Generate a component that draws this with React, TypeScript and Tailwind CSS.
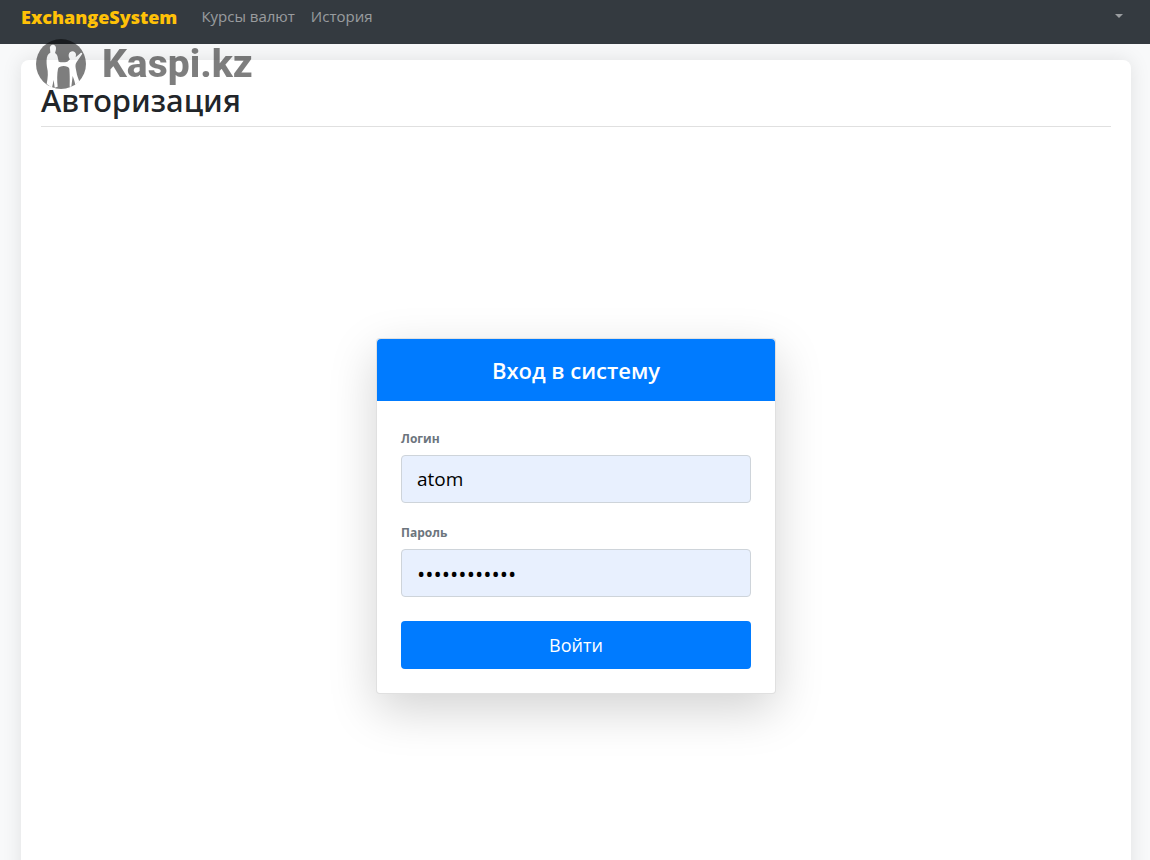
import { useState } from 'react';

const fieldClass =
  'h-12 w-full rounded border border-[#ced4da] bg-[#e8f0fe] px-[15px] text-black outline-none focus:border-[#80bdff]';

const KaspiLogo = () => (
  <div className="pointer-events-none absolute top-[39px] left-9 flex items-center gap-4 text-black opacity-50">
    <svg viewBox="18 15 150 150" className="size-[50px]" aria-hidden="true">
      <mask id="family">
        <circle cx="93" cy="90" r="75" fill="white" />
        <path
          fill="black"
          d="M60 45C58 36 64 32 70 32C77 33 80 41 77 50L75 57C81 60 83 66 84 74L86 83C94 86 104 85 112 83L120 76C114 68 115 58 121 54C128 49 138 54 138 62L137 70L152 57C155 55 158 58 156 61L140 84C136 90 136 95 137 102L141 122C143 130 148 138 147 143L136 152C134 142 131 134 128 126L124 158L119 158C120 135 119 115 118 104C115 93 87 93 84 104C81 118 81 140 83 158L74 161L71 138L66 161L50 150C54 130 55 115 51 100C49 85 49 72 53 64C55 59 58 58 61 56Z"
        />
      </mask>
      <rect x="18" y="15" width="150" height="150" fill="currentColor" mask="url(#family)" />
    </svg>
    <span className="font-[Roboto,sans-serif] text-[39px] leading-none font-extrabold">Kaspi.kz</span>
  </div>
);

const Navbar = () => (
  <nav className="flex h-11 items-start bg-[#343a40] px-[21px] pt-1">
    <a href="#" className="mr-6 text-lg leading-[26px] font-extrabold text-[#ffc107]">
      ExchangeSystem
    </a>
    <div className="flex flex-1 gap-4 text-[15px] leading-6 text-white/50">
      <a href="#rates">Курсы валют</a>
      <a href="#history">История</a>
    </div>
    <button type="button" aria-label="Меню пользователя" className="flex h-6 w-5 items-center justify-center">
      <span className="border-x-4 border-t-4 border-x-transparent border-t-white/50" />
    </button>
  </nav>
);

const LoginForm = () => {
  const [formData, setFormData] = useState({ login: 'atom', password: 'password1234' });

  const handleSubmit = (e: React.FormEvent) => {
    e.preventDefault();
  };

  return (
    <div className="w-full max-w-[400px] rounded border border-black/12 bg-white shadow-[0_16px_48px_rgba(0,0,0,0.175)]">
      <h4 className="rounded-t bg-[#007bff] py-4 text-center text-[22px] leading-[30px] font-semibold text-white">
        Вход в систему
      </h4>
      <form onSubmit={handleSubmit} className="p-6">
        <div className="mb-5">
          <label htmlFor="login" className="mb-1.5 block pt-1 text-xs leading-5 font-bold text-[#6c757d]">
            Логин
          </label>
          <input
            id="login"
            type="text"
            className={`${fieldClass} text-[19px]`}
            value={formData.login}
            onChange={e => setFormData({ ...formData, login: e.target.value })}
          />
        </div>
        <div className="mb-6">
          <label htmlFor="password" className="mb-1.5 block text-xs leading-5 font-bold text-[#6c757d]">
            Пароль
          </label>
          <input
            id="password"
            type="password"
            className={`${fieldClass} text-[22px]`}
            value={formData.password}
            onChange={e => setFormData({ ...formData, password: e.target.value })}
          />
        </div>
        <button type="submit" className="h-12 w-full rounded bg-[#007bff] text-lg text-white">
          Войти
        </button>
      </form>
    </div>
  );
};

export default function App() {
  return (
    <div className="relative min-h-screen bg-[#f8f9fa] font-['Open_Sans','Noto_Sans',sans-serif] text-[#212529]">
      <Navbar />
      <main className="mt-4 mr-[19px] ml-[21px] rounded-lg bg-white px-5 pt-[22px] shadow-[0_0_20px_rgba(0,0,0,0.1)]">
        <h2 className="border-b border-black/12 pb-2 font-['Noto_Sans',sans-serif] text-[31px] leading-9 font-medium">
          Авторизация
        </h2>
        <div className="flex min-h-[778px] items-center justify-center">
          <LoginForm />
        </div>
      </main>
      <KaspiLogo />
    </div>
  );
}
